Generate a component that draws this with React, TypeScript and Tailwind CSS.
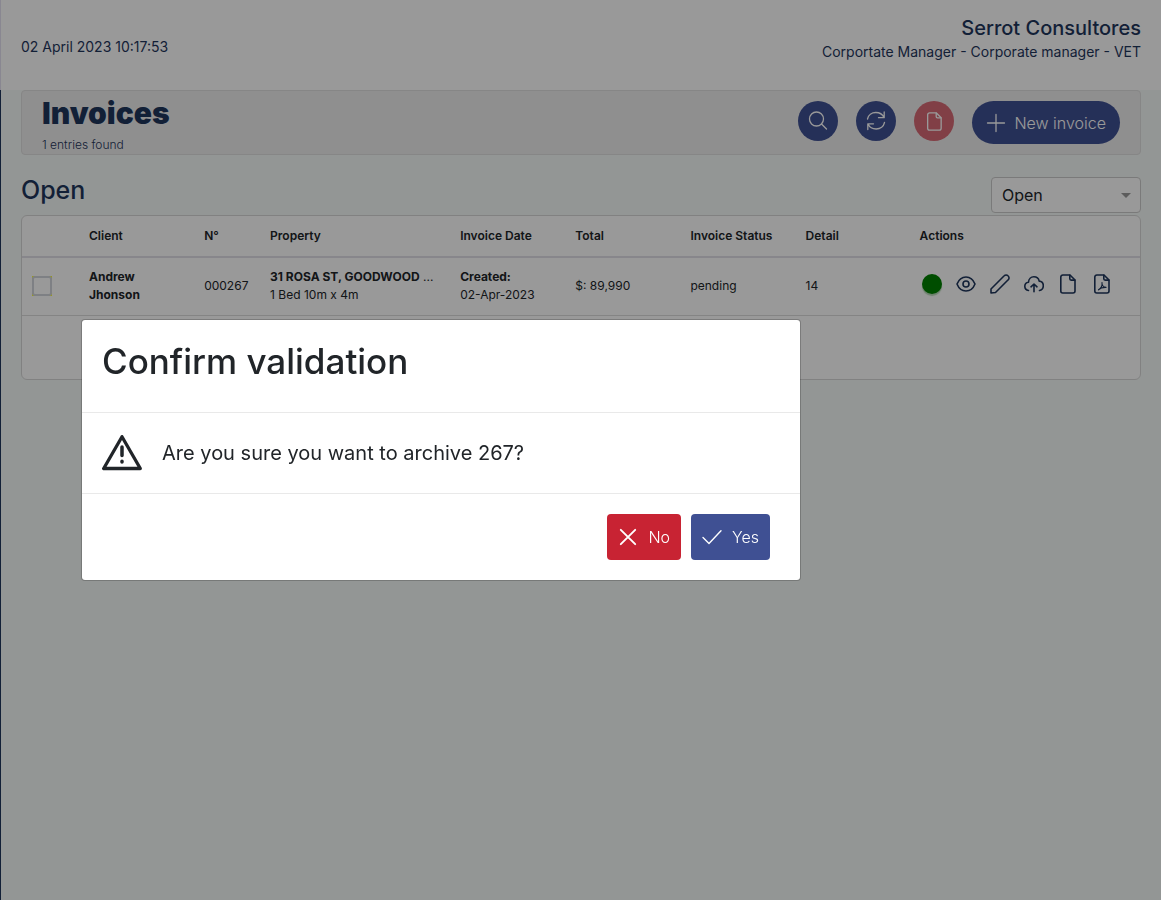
import React from "react";

type IconProps = { className?: string; width?: number; children: React.ReactNode };

function Icon({ className = "size-5", width = 1.5, children }: IconProps) {
  return (
    <svg
      viewBox="0 0 20 20"
      fill="none"
      stroke="currentColor"
      strokeWidth={width}
      strokeLinecap="round"
      strokeLinejoin="round"
      className={className}
      aria-hidden="true"
    >
      {children}
    </svg>
  );
}

const page = (
  <>
    <path d="M4.800 1H12l5 5v11a2 2 0 0 1-2 2H4.800a2 2 0 0 1-2-2V3a2 2 0 0 1 2-2Z" />
    <path d="M11.800 1.200v3.600a1.300 1.300 0 0 0 1.300 1.300h3.700" />
  </>
);

const actions = [
  {
    label: "View",
    drawing: (
      <>
        <circle cx="10" cy="10" r="3" />
        <path d="M1 10c1.600-4 5-7 9-7s7.400 3 9 7c-1.600 4-5 7-9 7s-7.400-3-9-7Z" />
      </>
    ),
  },
  {
    label: "Edit",
    drawing: (
      <path d="M1 19v-4L14.200 1.800a2.600 2.600 0 0 1 3.800 0l.2.2a2.600 2.600 0 0 1 0 3.800L5.500 18.500 1 19Z" />
    ),
  },
  {
    label: "Upload",
    drawing: (
      <>
        <path d="M10 17.800V10.200M7 12.800l3-2.800 3 2.800" />
        <path d="M4.500 16.500A4.300 4.300 0 0 1 .8 12.300C.8 10 2.500 8.400 4.500 8.200 4.700 5 7 2.800 9.800 2.800c2.700 0 4.900 1.800 5.400 4.300 2.400.2 4.100 2.200 4.100 4.600 0 2.500-1.500 4.300-3.800 4.800" />
      </>
    ),
  },
  { label: "Document", drawing: page },
  {
    label: "PDF",
    drawing: (
      <>
        {page}
        <path d="M10 8.500c.4 3-.7 5.600-3.500 7.300M10 8.500c-.4 2.500 1.200 4.500 4 4.900M6.500 15.800c1.500-1.600 4.200-2.500 7.500-2.400" strokeWidth="1.100" />
      </>
    ),
  },
];

const head = "px-2.5 text-left font-semibold";

export default function App() {
  return (
    <div className="flex min-h-screen flex-col bg-[#f6faf8] font-['Inter',sans-serif] text-[#212529]">
      <header className="flex h-[90px] items-center justify-between border-l border-[#e4e2f2] bg-white px-5 text-[#1f365c]">
        <time className="pt-1 text-sm">02 April 2023 10:17:53</time>
        <div className="pb-2.5 text-right">
          <p className="text-xl font-medium leading-6">Serrot Consultores</p>
          <p className="text-sm leading-6">Corportate Manager - Corporate manager - VET</p>
        </div>
      </header>

      <main className="flex-1 border-l border-[#1f365c] px-5">
        <section className="flex h-[65px] items-start justify-between rounded border border-[#dfdfdf] bg-[#efefef] px-5 text-[#1f365c]">
          <div>
            <h1 className="pt-1 text-3xl font-black leading-9">Invoices</h1>
            <p className="pt-1 text-xs font-light leading-5">1 entries found</p>
          </div>
          <div className="flex gap-[18px] pt-2.5 text-white">
            <button aria-label="Search" className="grid size-10 place-items-center rounded-full bg-[#3f5093]">
              <Icon width={1.3}><circle cx="8.500" cy="8" r="7" /><path d="m13.500 13 5 5" /></Icon>
            </button>
            <button aria-label="Refresh" className="grid size-10 place-items-center rounded-full bg-[#3f5093]">
              <Icon width={1.3}>
                <path d="M1.500 8C2.300 4.200 5.700 1.500 9.800 1.500c3.600 0 6.800 2 8.200 5M18.200 1v5.700h-5.700M18.500 11.500c-.8 3.800-4.200 6.500-8.300 6.500-3.600 0-6.800-2-8.200-5M1.800 18.500v-5.700h5.700" />
              </Icon>
            </button>
            <button aria-label="Archive" className="grid size-10 place-items-center rounded-full bg-[#d86a75]">
              <Icon width={1.4} className="size-[19px]">{page}</Icon>
            </button>
            <button className="flex h-[43px] items-center gap-2 rounded-full bg-[#3f5093] px-3.5 font-light">
              <Icon width={1.3}><path d="M1.500 10h17M10 1.500v17" /></Icon>
              New invoice
            </button>
          </div>
        </section>

        <div className="flex h-[60px] items-end justify-between pb-0.5">
          <h2 className="pb-[7px] text-[25px] font-medium leading-8 text-[#1f365c]">Open</h2>
          <div className="relative">
            <select aria-label="Status" className="h-9 w-[150px] appearance-none rounded border border-[#ccc] bg-white px-2.5 text-base">
              <option>Open</option>
            </select>
            <svg viewBox="0 0 10 5" className="pointer-events-none absolute right-2.5 top-4 h-[5px] w-2.5" aria-hidden="true">
              <path d="M0 0h10L5 5z" fill="#999" />
            </svg>
          </div>
        </div>

        <div className="rounded-md border border-[#d8d8d8] bg-white pb-[63px]">
          <table className="w-full table-fixed border-collapse text-xs leading-[18px]">
            <colgroup>
              <col className="w-[5.1%]" /><col className="w-[10.3%]" /><col className="w-[5.9%]" /><col className="w-[17%]" />
              <col className="w-[10.3%]" /><col className="w-[10.3%]" /><col className="w-[10.3%]" /><col className="w-[10.2%]" /><col />
            </colgroup>
            <thead>
              <tr className="h-[41px] border-b-2 border-[#e1e0e8]">
                <th aria-label="Select" />
                <th className={head}>Client</th><th className={head}>N°</th><th className={head}>Property</th>
                <th className={head}>Invoice Date</th><th className={head}>Total</th><th className={head}>Invoice Status</th>
                <th className={head}>Detail</th><th className={head}>Actions</th>
              </tr>
            </thead>
            <tbody>
              <tr className="h-[58px] border-b border-[#dcdcdc]">
                <td className="px-2.5">
                  <span className="block size-5 bg-[#ffff30]">
                    <input type="checkbox" aria-label="Select invoice 000267" className="block size-5 appearance-none rounded-[3px] border-2 border-[#d2d5dc] bg-white" />
                  </span>
                </td>
                <td className="px-2.5 font-bold">Andrew Jhonson</td>
                <td className="px-2.5">000267</td>
                <td className="px-2.5">
                  <p className="truncate"><b>31 ROSA ST, GOODWOOD</b> ...</p>
                  <p>1 Bed 10m x 4m</p>
                </td>
                <td className="px-2.5"><b>Created:</b><br />02-Apr-2023</td>
                <td className="px-2.5">$: 89,990</td>
                <td className="px-2.5">pending</td>
                <td className="px-2.5">14</td>
                <td className="px-2.5 pb-1">
                  <div className="flex gap-2.5 text-[#1f365c]">
                    <span className="grid size-6 place-items-center"><span className="size-5 rounded-full bg-[#008000] shadow-[0_2px_1px_#b5d8b5]" /></span>
                    {actions.map(({ label, drawing }) => (
                      <button key={label} aria-label={label} className="grid size-6 place-items-center"><Icon width={1.6}>{drawing}</Icon></button>
                    ))}
                  </div>
                </td>
              </tr>
            </tbody>
          </table>
        </div>
      </main>

      <div className="fixed inset-0 flex items-center justify-center bg-black/40">
        <div role="dialog" aria-modal="true" aria-labelledby="dialog-title" className="mr-[279px] w-[720px] rounded border border-black/20 bg-white bg-clip-padding">
          <div className="h-[93px] border-b border-[#e9e9e9] px-5 pt-5">
            <h2 id="dialog-title" className="text-[35px] font-medium leading-[42px]">Confirm validation</h2>
          </div>
          <div className="flex h-[81px] items-center gap-5 border-b border-[#e9e9e9] px-5 text-xl">
            <svg viewBox="0 0 40 36" className="h-9 w-10" fill="none" stroke="currentColor" aria-hidden="true">
              <path d="M20 1.700 1.700 33.500h36.600Z" strokeWidth="3.300" strokeLinejoin="round" />
              <path d="M20 12v8.500M20 26.200v.8" strokeWidth="3.500" strokeLinecap="round" />
            </svg>
            Are you sure you want to archive 267?
          </div>
          <div className="flex justify-end gap-2.5 px-[30px] py-5 font-light text-white">
            <button className="flex h-[46px] items-center gap-2.5 rounded bg-[#c82333] px-[11px]">
              <Icon width={1.9}><path d="m2.800 2.800 14.400 14.400M17.200 2.800 2.800 17.200" /></Icon>
              No
            </button>
            <button className="flex h-[46px] items-center gap-2.5 rounded bg-[#3f5093] px-[11px]">
              <Icon width={1.4}><path d="m1 10.500 6 6L19 3.800" /></Icon>
              Yes
            </button>
          </div>
        </div>
      </div>
    </div>
  );
}
